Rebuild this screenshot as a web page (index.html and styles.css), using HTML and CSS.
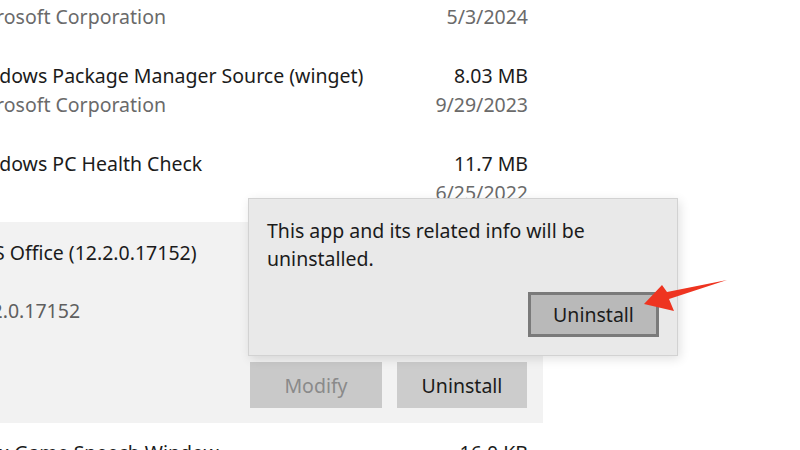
FILE: index.html
```html
<!DOCTYPE html>
<html>
<head>
<meta charset="utf-8">
<link rel="stylesheet" href="styles.css">
</head>
<body>
<div class="list">
  <div class="row">
    <div class="line"><span class="name">Microsoft Edge WebView2 Runtime</span><span class="val">208 MB</span></div>
    <div class="line sub"><span>Microsoft Corporation</span><span class="val">5/3/2024</span></div>
  </div>
  <div class="row">
    <div class="line"><span class="name">Windows Package Manager Source (winget)</span><span class="val">8.03 MB</span></div>
    <div class="line sub"><span>Microsoft Corporation</span><span class="val">9/29/2023</span></div>
  </div>
  <div class="row">
    <div class="line"><span class="name">Windows PC Health Check</span><span class="val">11.7 MB</span></div>
    <div class="line sub"><span></span><span class="val">6/25/2022</span></div>
  </div>
  <div class="row selected">
    <div class="line"><span class="name">WPS Office (12.2.0.17152)</span><span class="val"></span></div>
    <div class="line sub"><span>&nbsp;</span></div>
    <div class="line sub"><span>12.2.0.17152</span></div>
    <div class="actions">
      <button class="btn disabled">Modify</button>
      <button class="btn">Uninstall</button>
    </div>
  </div>
  <div class="row">
    <div class="line"><span class="name">Xbox Game Speech Window</span><span class="val">16.0 KB</span></div>
    <div class="line sub"><span>Microsoft Corporation</span><span class="val">5/3/2024</span></div>
  </div>
</div>

<div class="dialog">
  <p class="msg">This app and its related info will be uninstalled.</p>
  <div class="dialog-actions">
    <button class="confirm">Uninstall</button>
  </div>
</div>

<svg class="arrow" width="800" height="450" viewBox="0 0 800 450">
  <polygon points="644,304 662,285 667,292 727,280 669,299 674,311" fill="#ee3420"/>
</svg>
</body>
</html>
```
FILE: styles.css
```css
html, body {
  margin: 0;
  padding: 0;
  background: #ffffff;
  width: 800px;
  height: 450px;
  overflow: hidden;
  font-family: "Noto Sans", "Open Sans", sans-serif;
  color: #1b1b1b;
}

.list {
  width: 579px;
  margin-left: -36px;
  margin-top: -42px;
  display: flex;
  flex-direction: column;
}

.row {
  padding: 15px 15px 15px 0;
  display: flex;
  flex-direction: column;
}

.row.selected {
  background: #f2f2f2;
  padding-right: 16px;
  padding-top: 16px;
}

.line {
  display: flex;
  justify-content: space-between;
  align-items: center;
  height: 29px;
  font-size: 19.5px;
  white-space: nowrap;
}

.line.sub {
  color: #6a6a6a;
}

.row.selected .line.sub {
  color: #5f5f5f;
}

.val {
  text-align: right;
}

.actions {
  display: flex;
  justify-content: flex-end;
  gap: 15px;
  margin-top: 37px;
}

.btn {
  width: 130px;
  height: 46px;
  border: none;
  background: #cccccc;
  font-family: inherit;
  font-size: 19.5px;
  color: #1b1b1b;
  padding: 0;
}

.btn.disabled {
  width: 132px;
  color: #8a8a8a;
  background: #c9c9c9;
}

.dialog {
  position: absolute;
  left: 248px;
  top: 198px;
  width: 430px;
  height: 158px;
  box-sizing: border-box;
  background: #e9e9e9;
  border: 1px solid #d2d2d2;
  box-shadow: 2px 3px 10px rgba(0, 0, 0, 0.12);
  padding: 18px;
  display: flex;
  flex-direction: column;
}

.msg {
  margin: 0;
  font-size: 19.5px;
  line-height: 28px;
  color: #1b1b1b;
  width: 340px;
}

.dialog-actions {
  margin-top: auto;
  display: flex;
  justify-content: flex-end;
}

.confirm {
  width: 131px;
  height: 45px;
  box-sizing: border-box;
  border: 3px solid #7a7a7a;
  background: #b9b9b9;
  font-family: inherit;
  font-size: 19.5px;
  color: #1b1b1b;
  padding: 0;
}

.arrow {
  position: absolute;
  left: 0;
  top: 0;
  pointer-events: none;
}
```
